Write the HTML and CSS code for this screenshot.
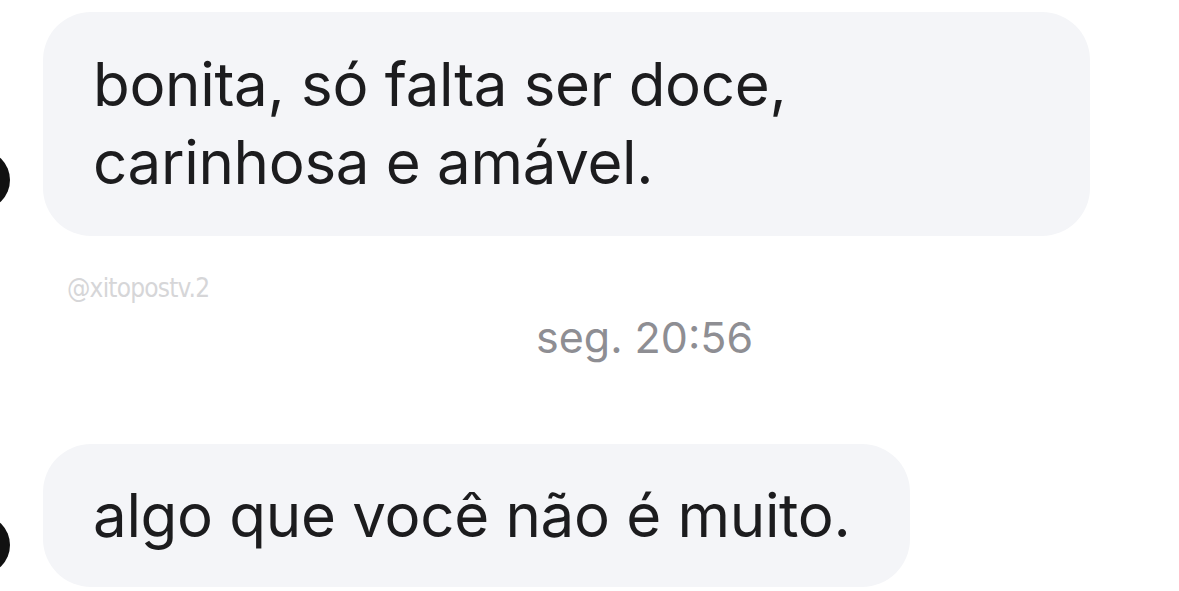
FILE: index.html
```html
<!DOCTYPE html>
<html lang="pt">
<head>
  <meta charset="UTF-8" />
  <meta name="viewport" content="width=device-width, initial-scale=1.0" />
  <title>Mensagens</title>
  <link rel="stylesheet" href="styles.css">
</head>
<body>
  <div class="chat">
    <div class="row first">
      <div class="avatar"></div>
      <div class="bubble wide">bonita, só falta ser doce,<br>carinhosa e amável.</div>
    </div>
    <div class="watermark">@xitopostv.2</div>
    <div class="time">seg. 20:56</div>
    <div class="row second">
      <div class="avatar"></div>
      <div class="bubble">algo que você não é muito.</div>
    </div>
  </div>
</body>
</html>
```

FILE: styles.css
```css
* {
  box-sizing: border-box;
}
body {
  margin: 0;
  padding: 0;
  background: #ffffff;
  font-family: 'Inter', 'Liberation Sans', sans-serif;
  overflow: hidden;
}
.chat {
  display: flex;
  flex-direction: column;
  padding-top: 12px;
}
.row {
  display: flex;
  align-items: flex-end;
  gap: 33px;
}
.avatar {
  width: 60px;
  height: 60px;
  margin-left: -50px;
  border-radius: 50%;
  background: #111;
  flex-shrink: 0;
}
.first .avatar {
  margin-bottom: 26px;
}
.second .avatar {
  margin-bottom: 12px;
}
.bubble {
  background: #f4f5f8;
  color: #1c1c1e;
  font-size: 60px;
  line-height: 78px;
  letter-spacing: -0.3px;
  border-radius: 48px;
  padding: 33px 50px 35px;
}
.bubble.wide {
  width: 1047px;
}
.second .bubble {
  width: 867px;
  padding: 32px 50px 33px;
}
.watermark {
  margin: 38px 0 0 67px;
  font-family: 'DejaVu Sans Condensed', 'DejaVu Sans', sans-serif;
  font-stretch: condensed;
  font-size: 26px;
  line-height: 28px;
  letter-spacing: -0.8px;
  color: #d6d6d8;
}
.time {
  margin: 10px 0 0 536px;
  font-size: 43px;
  line-height: 50px;
  color: #8e8e93;
}
.second {
  margin-top: 82px;
}
```
